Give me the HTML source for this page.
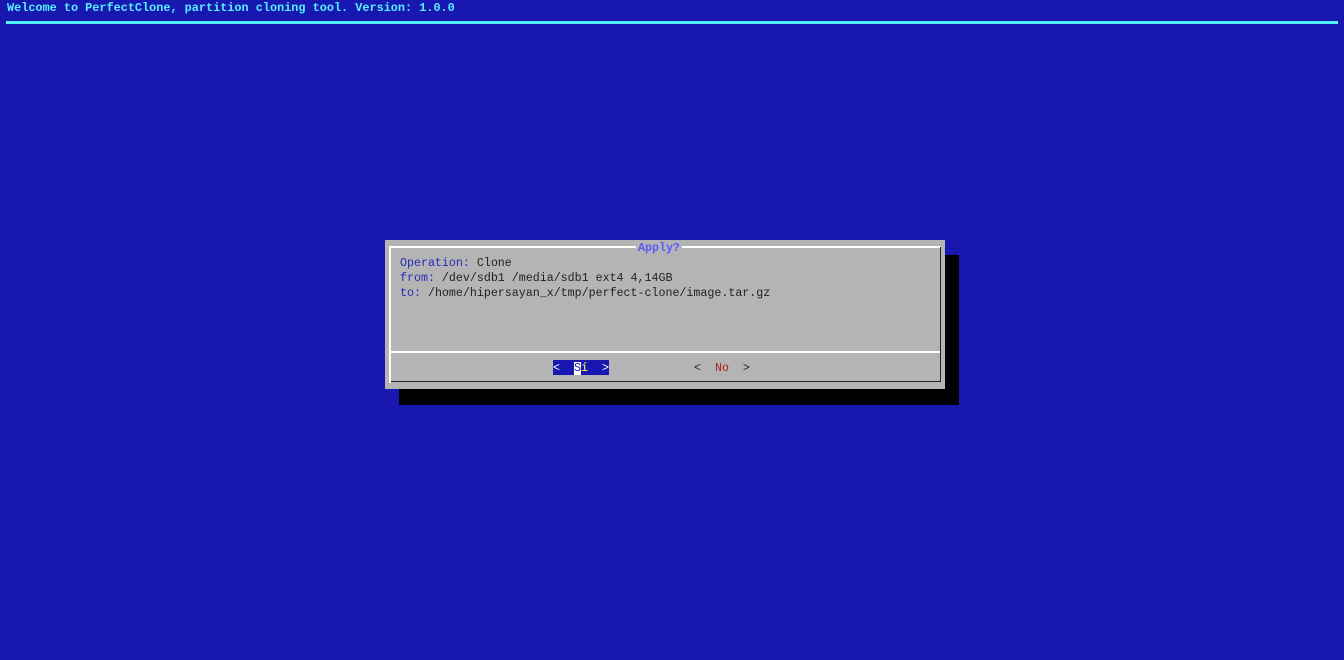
<!DOCTYPE html>
<html><head><meta charset="utf-8"><style>
body{margin:0;width:1344px;height:660px;background:#1818b0;position:relative;overflow:hidden;font-family:"Liberation Mono",monospace;font-size:11.65px}
.a{position:absolute;white-space:pre;line-height:15px}
</style></head><body>
<div class="a" style="left:7px;top:1px;color:#55f0ff;font-weight:bold;font-size:11.85px">Welcome to PerfectClone, partition cloning tool. Version: 1.0.0</div>
<div class="a" style="left:6px;top:21px;width:1332px;height:3px;background:#55f0ff"></div>
<div class="a" style="left:399px;top:255px;width:560px;height:150px;background:#000"></div>
<div class="a" style="left:385px;top:240px;width:560px;height:149px;background:#b4b4b4"></div>
<div class="a" style="left:389px;top:246px;width:552px;height:2px;background:#fff"></div>
<div class="a" style="left:389px;top:246px;width:2px;height:137px;background:#fff"></div>
<div class="a" style="left:940px;top:247px;width:1px;height:135px;background:#222"></div>
<div class="a" style="left:391px;top:381px;width:550px;height:1px;background:#222"></div>
<div class="a" style="left:391px;top:351px;width:549px;height:2px;background:#fff"></div>
<div class="a" style="left:636px;top:241px;padding:0 2px;background:#b4b4b4;color:#5a5aff;font-weight:bold">Apply?</div>
<div class="a" style="left:400px;top:256px;color:#222"><span style="color:#2a2ab8">Operation:</span> Clone
<span style="color:#2a2ab8">from:</span> /dev/sdb1 /media/sdb1 ext4 4,14GB
<span style="color:#2a2ab8">to:</span> /home/hipersayan_x/tmp/perfect-clone/image.tar.gz</div>
<div class="a" style="left:553px;top:360px;width:56px;height:15px;background:#1818b0"></div>
<div class="a" style="left:553px;top:361px;color:#fff"><  <span style="background:#fff;color:#1818b0">S</span><span style="color:#ffff55">í</span>  ></div>
<div class="a" style="left:694px;top:361px;color:#222"><  <span style="color:#b02020">No</span>  ></div>
</body></html>
